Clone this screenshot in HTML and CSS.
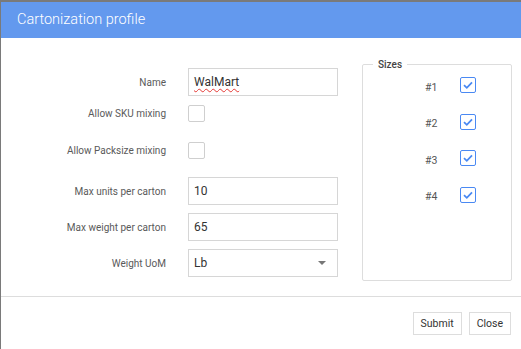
FILE: index.html
```html
<!DOCTYPE html>
<html lang="en">
<head>
  <meta charset="UTF-8">
  <meta name="viewport" content="width=device-width, initial-scale=1">
  <title>Cartonization profile</title>
  <link rel="stylesheet" href="styles.css">
</head>
<body>

  <div class="dialog">
    <div class="dialog-header">Cartonization profile</div>

    <div class="dialog-body">
      <form class="profile-form">

        <div class="form-row row-name">
          <label>Name</label>
          <div class="field"><span class="spell">WalMart</span></div>
        </div>

        <div class="form-row row-sku">
          <label>Allow SKU mixing</label>
          <span class="box"></span>
        </div>

        <div class="form-row row-pack">
          <label>Allow Packsize mixing</label>
          <span class="box"></span>
        </div>

        <div class="form-row row-units">
          <label>Max units per carton</label>
          <input type="text" class="field" value="10">
        </div>

        <div class="form-row row-weight">
          <label>Max weight per carton</label>
          <input type="text" class="field" value="65">
        </div>

        <div class="form-row">
          <label>Weight UoM</label>
          <div class="field select">
            <span>Lb</span>
            <span class="caret"></span>
          </div>
        </div>

      </form>

      <fieldset class="sizes">
        <legend>Sizes</legend>
        <div class="size-row">
          <span class="size-label">#1</span>
          <span class="checked"><svg viewBox="0 0 16 16" width="16" height="16"><path d="M4 8.2 L6.8 10.8 L12 5.4" fill="none" stroke="#4a89f3" stroke-width="1.8"/></svg></span>
        </div>
        <div class="size-row">
          <span class="size-label">#2</span>
          <span class="checked"><svg viewBox="0 0 16 16" width="16" height="16"><path d="M4 8.2 L6.8 10.8 L12 5.4" fill="none" stroke="#4a89f3" stroke-width="1.8"/></svg></span>
        </div>
        <div class="size-row">
          <span class="size-label">#3</span>
          <span class="checked"><svg viewBox="0 0 16 16" width="16" height="16"><path d="M4 8.2 L6.8 10.8 L12 5.4" fill="none" stroke="#4a89f3" stroke-width="1.8"/></svg></span>
        </div>
        <div class="size-row">
          <span class="size-label">#4</span>
          <span class="checked"><svg viewBox="0 0 16 16" width="16" height="16"><path d="M4 8.2 L6.8 10.8 L12 5.4" fill="none" stroke="#4a89f3" stroke-width="1.8"/></svg></span>
        </div>
      </fieldset>
    </div>

    <div class="dialog-footer">
      <button type="button" class="btn">Submit</button>
      <button type="button" class="btn">Close</button>
    </div>
  </div>

</body>
</html>
```

FILE: styles.css
```css
  html, body {
    margin: 0;
    height: 100%;
  }

  body {
    font-family: Roboto, 'Liberation Sans', sans-serif;
    background: #7a7a7a;
    padding: 2px 0 0 1px;
    box-sizing: border-box;
    overflow: hidden;
  }

  .dialog {
    background: white;
    height: 100%;
  }

  .dialog-header {
    height: 36px;
    background: #6399ee;
    color: white;
    font-size: 14.5px;
    font-weight: 300;
    line-height: 35px;
    padding-left: 16px;
  }

  .dialog-body {
    display: flex;
    padding: 26px 0 0 15px;
    height: 232px;
    border-bottom: 1px solid #dddddd;
  }

  .profile-form {
    width: 322px;
    margin: 4px 24px 0 0;
  }

  .form-row {
    display: flex;
    align-items: center;
    gap: 22px;
    margin-bottom: 8px;
  }

  .row-name { margin-bottom: 9px; }
  .row-sku { margin-bottom: 20px; }
  .row-pack { margin-bottom: 18px; }

  .form-row label {
    width: 150px;
    text-align: right;
    font-size: 10px;
    color: #5a5a5a;
  }

  .field {
    width: 150px;
    height: 28px;
    box-sizing: border-box;
    border: 1px solid #d6d6d6;
    padding: 0 5px;
    font-family: Roboto, 'Liberation Sans', sans-serif;
    font-size: 12px;
    line-height: 26px;
    color: #333;
    background: white;
    outline: none;
  }

  .spell {
    text-decoration: underline wavy #e53935;
    text-decoration-thickness: 1px;
    text-underline-offset: 2px;
  }

  .select {
    display: flex;
    align-items: center;
    justify-content: space-between;
    padding-right: 11px;
  }

  .caret {
    width: 0;
    height: 0;
    border-left: 4px solid transparent;
    border-right: 4px solid transparent;
    border-top: 4px solid #777;
  }

  .box {
    width: 17px;
    height: 17px;
    box-sizing: border-box;
    border: 1px solid #cfcfcf;
    border-radius: 2px;
  }

  .sizes {
    width: 150px;
    height: 222px;
    box-sizing: border-box;
    margin: -5px 0 0 0;
    padding: 7px 0 0 0;
    border: 1px solid #dddddd;
    border-radius: 2px;
  }

  .sizes legend {
    margin-left: 10px;
    padding: 0 5px;
    font-size: 10px;
    font-weight: 500;
    color: #444;
  }

  .size-row {
    display: flex;
    align-items: center;
    height: 16px;
    margin-bottom: 20.5px;
    padding-left: 62px;
  }

  .size-label {
    width: 35px;
    font-size: 10.5px;
    color: #555;
    padding-top: 4px;
  }

  .checked {
    width: 16px;
    height: 16px;
    box-sizing: border-box;
    border: 1.5px solid #4a89f3;
    border-radius: 2px;
    display: flex;
    align-items: center;
    justify-content: center;
  }

  .checked svg {
    flex: none;
  }

  .dialog-footer {
    display: flex;
    justify-content: flex-end;
    gap: 7px;
    padding: 15px 10px 0 0;
  }

  .btn {
    height: 23px;
    padding: 0 7px;
    background: white;
    border: 1px solid #dddddd;
    font-family: Roboto, 'Liberation Sans', sans-serif;
    font-size: 10.5px;
    color: #333;
    cursor: pointer;
  }
```
